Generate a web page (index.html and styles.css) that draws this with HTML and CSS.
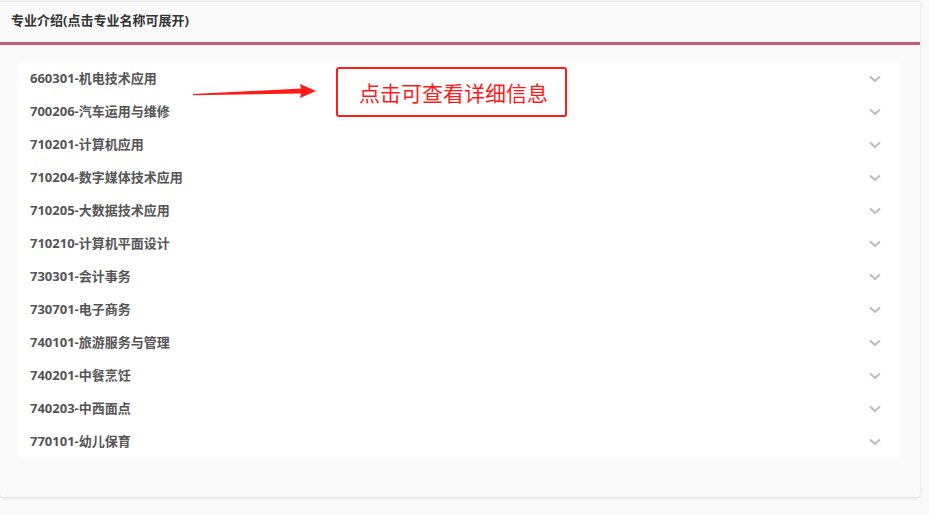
FILE: index.html
```html
<!DOCTYPE html>
<html lang="zh">
<head>
<meta charset="utf-8">
<link rel="stylesheet" href="styles.css">
</head>
<body>
<div class="card">
  <div class="card-head">专业介绍(点击专业名称可展开)</div>
  <div class="card-body">
    <ul class="list">
      <li class="item"><span>660301-机电技术应用</span><svg class="chev" viewBox="0 0 12 8"><path d="M1 1.5 L6 6 L11 1.5"/></svg></li>
      <li class="item"><span>700206-汽车运用与维修</span><svg class="chev" viewBox="0 0 12 8"><path d="M1 1.5 L6 6 L11 1.5"/></svg></li>
      <li class="item"><span>710201-计算机应用</span><svg class="chev" viewBox="0 0 12 8"><path d="M1 1.5 L6 6 L11 1.5"/></svg></li>
      <li class="item"><span>710204-数字媒体技术应用</span><svg class="chev" viewBox="0 0 12 8"><path d="M1 1.5 L6 6 L11 1.5"/></svg></li>
      <li class="item"><span>710205-大数据技术应用</span><svg class="chev" viewBox="0 0 12 8"><path d="M1 1.5 L6 6 L11 1.5"/></svg></li>
      <li class="item"><span>710210-计算机平面设计</span><svg class="chev" viewBox="0 0 12 8"><path d="M1 1.5 L6 6 L11 1.5"/></svg></li>
      <li class="item"><span>730301-会计事务</span><svg class="chev" viewBox="0 0 12 8"><path d="M1 1.5 L6 6 L11 1.5"/></svg></li>
      <li class="item"><span>730701-电子商务</span><svg class="chev" viewBox="0 0 12 8"><path d="M1 1.5 L6 6 L11 1.5"/></svg></li>
      <li class="item"><span>740101-旅游服务与管理</span><svg class="chev" viewBox="0 0 12 8"><path d="M1 1.5 L6 6 L11 1.5"/></svg></li>
      <li class="item"><span>740201-中餐烹饪</span><svg class="chev" viewBox="0 0 12 8"><path d="M1 1.5 L6 6 L11 1.5"/></svg></li>
      <li class="item"><span>740203-中西面点</span><svg class="chev" viewBox="0 0 12 8"><path d="M1 1.5 L6 6 L11 1.5"/></svg></li>
      <li class="item"><span>770101-幼儿保育</span><svg class="chev" viewBox="0 0 12 8"><path d="M1 1.5 L6 6 L11 1.5"/></svg></li>
    </ul>
  </div>
</div>
<svg class="arrow" viewBox="0 0 130 20" width="130" height="20"><path d="M0 13 L108 7.5 L107 3 L123 10 L107 17 L108 12.5 L0 14.2 Z"/></svg>
<div class="callout">点击可查看详细信息</div>
</body>
</html>
```
FILE: styles.css
```css
html, body { margin: 0; padding: 0; }
body {
  background: #f9f9f9;
  font-family: "Open Sans", "Noto Sans CJK SC", sans-serif;
  width: 929px;
  height: 515px;
  position: relative;
  overflow: hidden;
}
.card {
  width: 920px;
  height: 496px;
  margin-top: 1px;
  background: #fafafa;
  border-radius: 0 0 4px 4px;
  box-shadow: 0 1px 3px rgba(0,0,0,0.12);
  border-top: 1px solid #e6e6e6;
  box-sizing: border-box;
}
.card-head {
  height: 43px;
  box-sizing: border-box;
  padding: 9px 0 0 11px;
  font-size: 13px;
  font-weight: bold;
  color: #333;
  line-height: 18px;
  border-bottom: 3px solid #bf5a78;
}
.card-body {
  padding: 17px 19px 0 18px;
}
.list {
  list-style: none;
  margin: 0;
  padding: 0;
  background: #fff;
}
.item {
  height: 33px;
  display: flex;
  align-items: center;
  justify-content: space-between;
  padding: 0 20px 0 12px;
  font-size: 13px;
  font-weight: bold;
  color: #555;
}
.item span {
  position: relative;
  top: -1px;
}
.chev {
  width: 12px;
  height: 8px;
  fill: none;
  stroke: #bbb;
  stroke-width: 2;
}
.arrow {
  position: absolute;
  left: 193px;
  top: 81px;
  fill: #ff1a1a;
}
.callout {
  position: absolute;
  left: 336px;
  top: 67px;
  width: 231px;
  height: 50px;
  box-sizing: border-box;
  border: 2.5px solid #ff1a1a;
  border-radius: 3px;
  color: #ff1a1a;
  font-family: "Noto Sans CJK SC", sans-serif;
  font-size: 21px;
  line-height: 46px;
  padding-left: 21px;
}
```
